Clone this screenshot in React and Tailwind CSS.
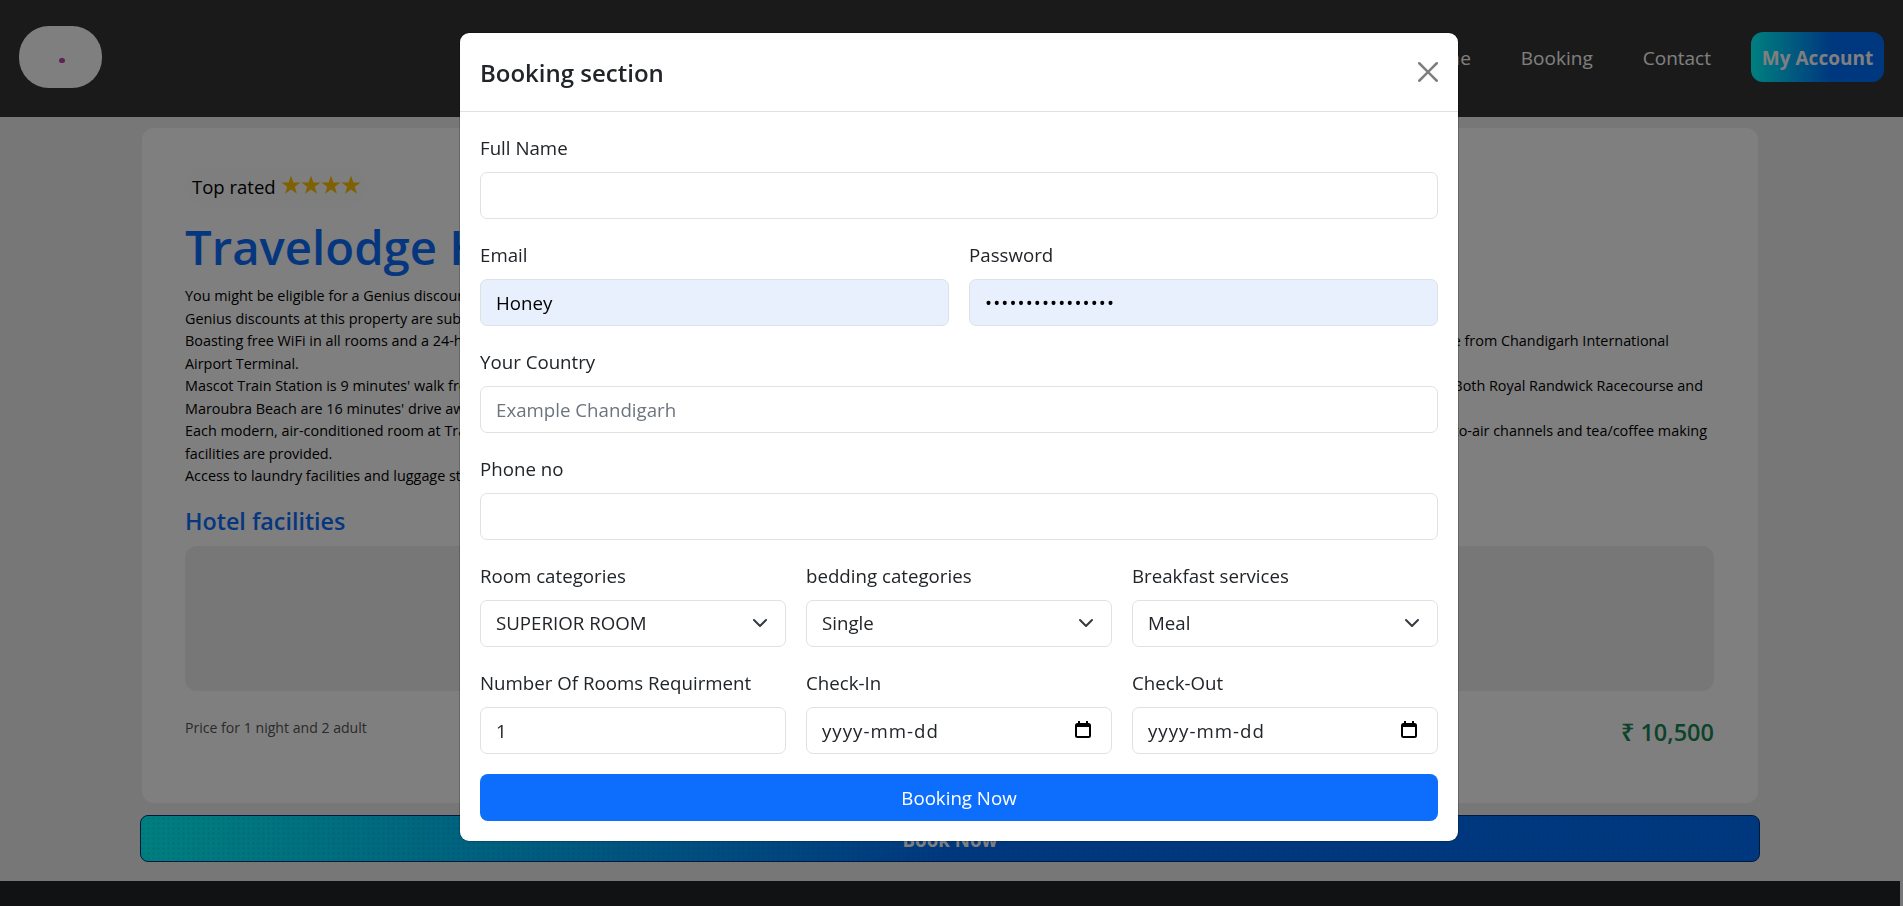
const font = { fontFamily: '"Open Sans", "Noto Sans", sans-serif' };

const inputClass =
  'block w-full h-[47px] rounded-[7px] border border-[#dee2e6] px-[15px] text-[18.7px] outline-none placeholder:text-[#6c757d]';
const plainInput = inputClass + ' bg-white text-[#212529]';
const autofillInput = inputClass + ' bg-[#e8f0fe] text-black';

function Field({ label, children }) {
  return (
    <div className="mb-[21px] min-w-0 flex-1">
      <label className="mb-[9px] block h-[30px] text-[18.7px] leading-[30px] text-[#212529]">{label}</label>
      {children}
    </div>
  );
}

function Select({ value }) {
  return (
    <div className="relative">
      <select defaultValue={value} className={plainInput + ' appearance-none'}>
        <option>{value}</option>
      </select>
      <svg className="pointer-events-none absolute right-[18px] top-[15px] h-4 w-4" viewBox="0 0 16 16" fill="none">
        <path d="m2 5 6 6 6-6" stroke="#343a40" strokeLinecap="round" strokeLinejoin="round" strokeWidth="2" />
      </svg>
    </div>
  );
}

function DateInput() {
  return (
    <div className="relative">
      <input className={plainInput + ' tracking-[1px]'} defaultValue="yyyy-mm-dd" />
      <svg className="pointer-events-none absolute right-[21px] top-[14px] h-[17px] w-4" viewBox="0 0 16 17" fill="none">
        <rect x="1" y="3" width="14" height="13" rx="1.5" stroke="#000" strokeWidth="2" />
        <rect x="1" y="3" width="14" height="3" fill="#000" />
        <rect x="3" y="0" width="2" height="3" fill="#000" />
        <rect x="11" y="0" width="2" height="3" fill="#000" />
      </svg>
    </div>
  );
}

function Navbar() {
  return (
    <nav className="flex h-[117px] items-center justify-between bg-[#343434] px-[19px] pb-[3px]">
      <div className="flex h-[62px] w-[83px] items-center justify-center rounded-[30px] bg-white">
        <span className="ml-[3px] mt-[7px] h-[5px] w-[6px] rounded-full bg-[#c040b0]" />
      </div>
      <div className="flex items-center gap-[50px] text-[19px] text-white">
        <a className="pt-[2px]">Home</a>
        <a className="pt-[2px]">Booking</a>
        <a className="pt-[2px]">Contact</a>
        <a className="-ml-[10px] flex h-[50px] w-[133px] items-center justify-center rounded-[12px] bg-[linear-gradient(90deg,#00ffff_0%,#0070ff_60%)] pt-[2px] font-bold">
          My Account
        </a>
      </div>
    </nav>
  );
}

function Star() {
  return (
    <svg className="h-5 w-5" viewBox="0 0 20 20" fill="currentColor">
      <polygon points="10,0.5 12.4,7.4 19.6,7.4 13.8,11.8 15.9,18.8 10,14.6 4.1,18.8 6.2,11.8 0.4,7.4 7.6,7.4" />
    </svg>
  );
}

// the long lines run behind the modal, so each one is pinned at both ends
function Line({ left, right, pad }) {
  return (
    <span className="flex justify-between whitespace-nowrap" style={{ paddingRight: pad }}>
      <span>{left}</span>
      <span>{right}</span>
    </span>
  );
}

function HotelCard() {
  return (
    <div className="mx-[142px] mt-[11px] h-[675px] rounded-[12px] bg-white pl-[43px] pr-[44px] pt-[39px]">
      <div className="flex h-[40px] w-[182px] items-center gap-[5px] rounded-full bg-[#fdfdfd] pl-[7px] text-[18.5px] text-black">
        <span>Top rated</span>
        <span className="flex -translate-y-[2px] text-[#ffc107]">
          {[0, 1, 2, 3].map((i) => (
            <Star key={i} />
          ))}
        </span>
      </div>
      <h1 className="mt-[6px] whitespace-nowrap text-[47.3px] font-semibold leading-[68px] text-[#0d6efd]">Travelodge Hotel</h1>
      <div className="mt-[4px] text-[14.4px] leading-[22.5px] text-black">
        <span className="block whitespace-nowrap">You might be eligible for a Genius discount at Travelodge Hotel. To check if a Genius discount is available sign in.</span>
        <span className="block whitespace-nowrap">Genius discounts at this property are subject to book dates, stay dates and other available deals.</span>
        <Line left="Boasting free WiFi in all rooms and a 24-hour reception, Travelodge Hotel Airport is located just" right="a 5-minute drive from Chandigarh International" pad={45} />
        <span className="block">Airport Terminal.</span>
        <Line left="Mascot Train Station is 9 minutes' walk from the hotel, and the city centre is just" right="a 15-minute train ride away. Both Royal Randwick Racecourse and" pad={11} />
        <span className="block">Maroubra Beach are 16 minutes' drive away.</span>
        <Line left="Each modern, air-conditioned room at Travelodge Hotel Airport features a desk," right="a flat-screen TV with free-to-air channels and tea/coffee making" pad={7} />
        <span className="block">facilities are provided.</span>
        <span className="block whitespace-nowrap">Access to laundry facilities and luggage storage is available at the hotel.</span>
      </div>
      <h2 className="mt-[15px] text-[23.3px] font-semibold leading-[36px] text-[#0d6efd]">Hotel facilities</h2>
      <div className="mt-[7px] h-[145px] rounded-[12px] bg-[#eeeeee]" />
      <div className="mt-[24px] flex items-start justify-between">
        <span className="mt-[2px] text-[14.1px] text-[#555555]">Price for 1 night and 2 adult</span>
        <span className="text-[23.5px] font-semibold text-[#198754]">₹ 10,500</span>
      </div>
    </div>
  );
}

function BookingModal() {
  return (
    <div className="fixed inset-0 bg-black/50">
      <div className="ml-[459px] mt-[32px] h-[810px] w-[1000px] rounded-[10px] border border-black/20 bg-white bg-clip-padding">
        <div className="flex h-[79px] items-center justify-between border-b border-[#dee2e6] pl-[20px] pr-[20px]">
          <h5 className="pt-[2px] text-[24px] font-semibold text-[#212529]">Booking section</h5>
          <svg className="h-5 w-5 opacity-50" viewBox="0 0 16 16" fill="#000">
            <path d="M.293.293a1 1 0 0 1 1.414 0L8 6.586 14.293.293a1 1 0 1 1 1.414 1.414L9.414 8l6.293 6.293a1 1 0 0 1-1.414 1.414L8 9.414l-6.293 6.293a1 1 0 0 1-1.414-1.414L6.586 8 .293 1.707a1 1 0 0 1 0-1.414" />
          </svg>
        </div>
        <form className="px-5 pt-[21px]">
          <Field label="Full Name">
            <input className={plainInput} />
          </Field>
          <div className="flex gap-5">
            <Field label="Email">
              <input className={autofillInput} defaultValue="Honey" />
            </Field>
            <Field label="Password">
              <input type="password" className={autofillInput + ' tracking-[1.1px]'} defaultValue="honeyhoney123456" />
            </Field>
          </div>
          <Field label="Your Country">
            <input className={plainInput} placeholder="Example Chandigarh" />
          </Field>
          <Field label="Phone no">
            <input className={plainInput} />
          </Field>
          <div className="flex gap-5">
            <Field label="Room categories">
              <Select value="SUPERIOR ROOM" />
            </Field>
            <Field label="bedding categories">
              <Select value="Single" />
            </Field>
            <Field label="Breakfast services">
              <Select value="Meal" />
            </Field>
          </div>
          <div className="flex gap-5">
            <Field label="Number Of Rooms Requirment">
              <input type="number" className={plainInput} defaultValue="1" />
            </Field>
            <Field label="Check-In">
              <DateInput />
            </Field>
            <Field label="Check-Out">
              <DateInput />
            </Field>
          </div>
          <button type="button" className="-mt-px block h-[47px] w-full rounded-[8px] bg-[#0d6efd] pt-[2px] text-[18.7px] text-white">
            Booking Now
          </button>
        </form>
      </div>
    </div>
  );
}

export default function App() {
  return (
    <div className="h-[906px] overflow-hidden bg-[#eeeeee]" style={font}>
      <Navbar />
      <div className="w-[1900px]">
        <HotelCard />
        <button className="mx-[140px] mt-[12px] block h-[47px] w-[1620px] rounded-[8px] border border-[#00337f] bg-[radial-gradient(circle,rgba(0,60,140,0.09)_1px,transparent_1.6px),linear-gradient(90deg,#00ffff_0%,#0070ff_50%)] bg-[length:5px_5px,100%_100%] pt-[3px] text-[18.7px] font-bold text-white">
          Book Now
        </button>
        <footer className="mt-[19px] h-[25px] bg-[#212529]" />
      </div>
      <BookingModal />
    </div>
  );
}
